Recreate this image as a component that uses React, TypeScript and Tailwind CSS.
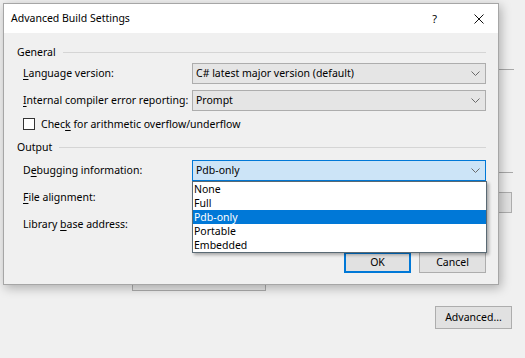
import React from "react";

const font = { fontFamily: '"Noto Sans", "Open Sans", sans-serif' };

function Chevron() {
  return (
    <svg width="9" height="5" viewBox="0 0 9 5" className="shrink-0">
      <path d="M0.5 0.5 L4.5 4.5 L8.5 0.5" fill="none" stroke="#6a6a6a" strokeWidth="1" />
    </svg>
  );
}

function Combo({ text, active }: { text?: string; active?: boolean }) {
  return (
    <div
      className={
        active
          ? "w-[294px] h-[21px] border border-[#0078d7] bg-[#cce4f7] flex items-center justify-between pl-[3px] pr-[5px]"
          : "w-[294px] h-[21px] border border-[#adadad] bg-[#e5e5e5] flex items-center justify-between pl-[3px] pr-[5px]"
      }
    >
      <span className="text-[10.5px] leading-none text-black whitespace-nowrap">{text}</span>
      <Chevron />
    </div>
  );
}

function Label({ children }: { children: React.ReactNode }) {
  return <div className="w-[169px] text-[10.5px] leading-none text-black whitespace-nowrap">{children}</div>;
}

function Group({ title }: { title: string }) {
  return (
    <div className="flex items-center h-[16px] pl-[13px] pr-[12px] gap-[7px]">
      <span className="text-[10.5px] leading-none text-black">{title}</span>
      <div className="flex-1 h-px bg-[#d5d5d5]" />
    </div>
  );
}

export default function App() {
  const items = ["None", "Full", "Pdb-only", "Portable", "Embedded"];
  return (
    <div className="relative w-[525px] h-[358px] bg-[#f0f0f0] overflow-hidden" style={font}>
      {/* background window content */}
      <div className="flex flex-col">
        <div className="h-[69px]" />
        <div className="ml-[499px] w-[15px] h-px bg-[#a8a8a8]" />
        <div className="h-[102px]" />
        <div className="ml-[499px] w-[14px] h-px bg-[#a8a8a8]" />
        <div className="h-[19px]" />
        <div className="ml-[490px] w-[22px] h-[21px] border border-[#adadad] bg-[#e1e1e1]" />
        <div className="h-[70px]" />
        <div className="ml-[132px] w-[134px] h-[8px] border-x border-b border-[#adadad] bg-[#e8e8e8]" />
        <div className="h-[15px]" />
        <div className="flex justify-end pr-[13px]">
          <div className="w-[77px] h-[23px] border border-[#adadad] bg-[#e1e1e1] flex items-center justify-center text-[10.5px] leading-none text-black">
            Advanced...
          </div>
        </div>
      </div>

      {/* dialog window */}
      <div className="absolute left-[3px] top-[3px] w-[496px] h-[282px] border border-[#a6a6a6] bg-[#f0f0f0] shadow-[2px_3px_10px_rgba(0,0,0,0.28)] flex flex-col">
        {/* title bar */}
        <div className="h-[29px] bg-white flex items-center pl-[7px] pr-[14px]">
          <span className="flex-1 text-[10.5px] leading-none text-black">Advanced Build Settings</span>
          <span className="text-[11px] leading-none text-black mr-[37px]">?</span>
          <svg width="10" height="10" viewBox="0 0 10 10">
            <path d="M0.5 0.5 L9.5 9.5 M9.5 0.5 L0.5 9.5" stroke="#111" strokeWidth="1" />
          </svg>
        </div>

        {/* body */}
        <div className="flex flex-col">
          <div className="mt-[11px]">
            <Group title="General" />
          </div>
          <div className="mt-[3px] flex items-center pl-[19px] pr-[12px]">
            <Label>
              <span className="underline underline-offset-2">L</span>anguage version:
            </Label>
            <Combo text="C# latest major version (default)" />
          </div>
          <div className="mt-[6px] flex items-center pl-[19px] pr-[12px]">
            <Label>
              <span className="underline underline-offset-2">I</span>nternal compiler error reporting:
            </Label>
            <Combo text="Prompt" />
          </div>
          <div className="mt-[7px] flex items-center pl-[19px] h-[12px] gap-[6px]">
            <div className="w-[12px] h-[12px] border border-[#333] bg-white" />
            <span className="text-[10.5px] leading-none text-black">
              Chec<span className="underline underline-offset-2">k</span> for arithmetic overflow/underflow
            </span>
          </div>
          <div className="mt-[9px]">
            <Group title="Output" />
          </div>
          <div className="mt-[5px] flex items-center pl-[19px] pr-[12px]">
            <Label>
              D<span className="underline underline-offset-2">e</span>bugging information:
            </Label>
            <div className="relative">
              <Combo text="Pdb-only" active />
              <div className="absolute left-0 top-[21px] w-[295px] border border-[#5a6a74] bg-white shadow-[2px_2px_3px_rgba(0,0,0,0.3)] z-10 flex flex-col">
                {items.map((it) => (
                  <div
                    key={it}
                    className={
                      it === "Pdb-only"
                        ? "h-[14px] flex items-center pl-[1px] bg-[#0078d7] text-white text-[10.5px] leading-none"
                        : "h-[14px] flex items-center pl-[1px] text-black text-[10.5px] leading-none"
                    }
                  >
                    {it}
                  </div>
                ))}
              </div>
            </div>
          </div>
          <div className="mt-[6px] flex items-center pl-[19px] pr-[12px]">
            <Label>
              <span className="underline underline-offset-2">F</span>ile alignment:
            </Label>
            <Combo text="" />
          </div>
          <div className="mt-[6px] flex items-center pl-[19px] pr-[12px]">
            <Label>
              Library <span className="underline underline-offset-2">b</span>ase address:
            </Label>
            <div className="w-[294px] h-[21px]" />
          </div>
          <div className="mt-[17px] flex justify-end gap-[8px] pr-[12px]">
            <div className="w-[67px] h-[21px] border border-[#0078d7] shadow-[inset_0_0_0_1px_#0078d7] bg-[#e1e1e1] flex items-center justify-center text-[10.5px] leading-none text-black">
              OK
            </div>
            <div className="w-[67px] h-[21px] border border-[#adadad] bg-[#e1e1e1] flex items-center justify-center text-[10.5px] leading-none text-black">
              Cancel
            </div>
          </div>
        </div>
      </div>
    </div>
  );
}
